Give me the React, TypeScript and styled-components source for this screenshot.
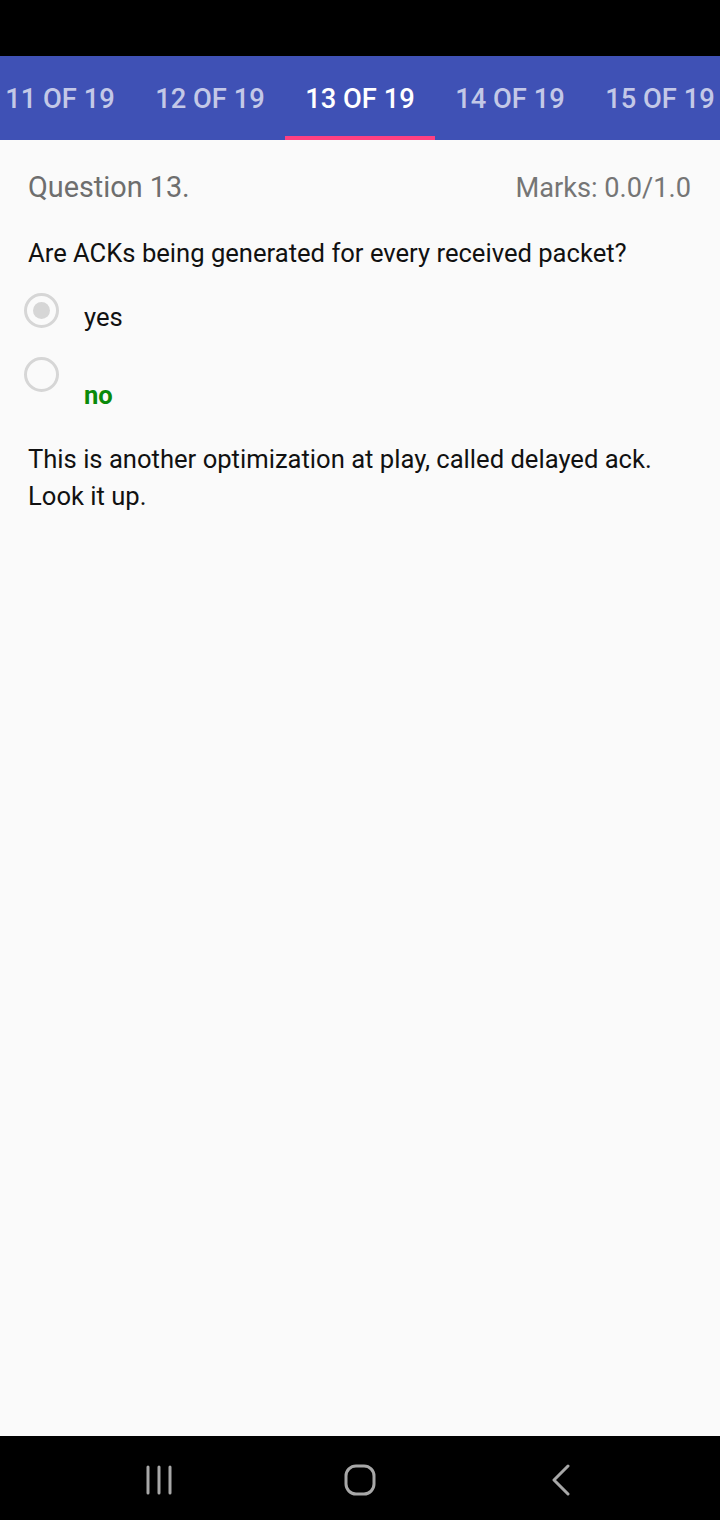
import React from "react";
import styled, {createGlobalStyle} from "styled-components";

const GlobalStyle = createGlobalStyle`
  html, body {
    margin: 0;
    padding: 0;
    background: #FAFAFA;
  }
  body {
    font-family: Roboto, "Noto Sans", sans-serif;
  }
`;

const Screen = styled.div({
  width: 720,
  height: 1520,
  display: "flex",
  flexDirection: "column",
  backgroundColor: "#FAFAFA",
  overflow: "hidden",
});

const StatusBar = styled.div({
  height: 56,
  backgroundColor: "#000",
  flexShrink: 0,
});

const TabBar = styled.div({
  height: 84,
  backgroundColor: "#3F51B5",
  display: "flex",
  flexShrink: 0,
  overflow: "hidden",
  marginLeft: -15, // strip is scrolled so the current tab sits centred
});

const Tab = styled.div<{$active?: boolean}>(({$active}) => ({
  width: 150,
  flexShrink: 0,
  display: "flex",
  alignItems: "center",
  justifyContent: "center",
  fontSize: 27.3,
  fontWeight: 500,
  color: $active ? "#FFFFFF" : "rgba(255,255,255,0.7)",
  boxSizing: "border-box",
  borderBottom: `4px solid ${$active ? "#FF4081" : "transparent"}`,
  paddingTop: 6,
}));

const Content = styled.div({
  flex: 1,
  padding: "30px 28px 0 28px",
});

const HeaderRow = styled.div({
  display: "flex",
  justifyContent: "space-between",
  alignItems: "baseline",
  color: "#6E6E6E",
  lineHeight: "34px",
});

const QuestionTitle = styled.div({
  fontSize: 28.8,
});

const Marks = styled.div({
  fontSize: 27.2,
  color: "#757575",
  marginRight: 1,
});

const QuestionText = styled.div({
  marginTop: 33,
  fontSize: 25.6,
  lineHeight: "30px",
  color: "#111",
});

const Options = styled.div({
  marginTop: 25,
  marginLeft: -4,
  display: "flex",
  flexDirection: "column",
  gap: 16,
});

const Option = styled.div({
  display: "flex",
  alignItems: "flex-start",
  gap: 25,
  minHeight: 48,
});

const Radio = styled.div<{$checked?: boolean}>(({$checked}) => ({
  width: 35,
  height: 35,
  borderRadius: "50%",
  border: "3px solid #D6D6D6",
  boxSizing: "border-box",
  display: "flex",
  alignItems: "center",
  justifyContent: "center",
  flexShrink: 0,
  "&::after": {
    content: '""',
    width: 17,
    height: 17,
    borderRadius: "50%",
    backgroundColor: $checked ? "#D6D6D6" : "transparent",
  },
}));

const OptionLabel = styled.div<{$correct?: boolean}>(({$correct}) => ({
  fontSize: 25.6,
  lineHeight: "30px",
  color: $correct ? "#0A8A0A" : "#111",
  fontWeight: $correct ? 700 : 400,
  paddingTop: $correct ? 23 : 9,
}));

const Explanation = styled.div({
  marginTop: 31,
  fontSize: 25.6,
  lineHeight: "37px",
  color: "#111",
});

const NavBar = styled.div({
  height: 84,
  boxSizing: "border-box",
  paddingTop: 4,
  backgroundColor: "#000",
  display: "flex",
  justifyContent: "center",
  alignItems: "center",
  flexShrink: 0,
});

const NavButton = styled.div({
  width: 201,
  display: "flex",
  justifyContent: "center",
  alignItems: "center",
});

const tabs = [11, 12, 13, 14, 15];

export default function App() {
  return (
    <Screen>
      <GlobalStyle />
      <StatusBar />
      <TabBar>
        {tabs.map((n) => (
          <Tab key={n} $active={n === 13}>
            {n} OF 19
          </Tab>
        ))}
      </TabBar>
      <Content>
        <HeaderRow>
          <QuestionTitle>Question 13.</QuestionTitle>
          <Marks>Marks: 0.0/1.0</Marks>
        </HeaderRow>
        <QuestionText>Are ACKs being generated for every received packet?</QuestionText>
        <Options>
          <Option>
            <Radio $checked />
            <OptionLabel>yes</OptionLabel>
          </Option>
          <Option>
            <Radio />
            <OptionLabel $correct>no</OptionLabel>
          </Option>
        </Options>
        <Explanation>
          This is another optimization at play, called delayed ack.
          <br />
          Look it up.
        </Explanation>
      </Content>
      <NavBar>
        <NavButton>
          <svg width="30" height="30" viewBox="0 0 30 30" fill="none" stroke="#A8A8A8" strokeWidth="3" strokeLinecap="round">
            <line x1="4" y1="2" x2="4" y2="28" />
            <line x1="15" y1="2" x2="15" y2="28" />
            <line x1="26" y1="2" x2="26" y2="28" />
          </svg>
        </NavButton>
        <NavButton>
          <svg width="32" height="32" viewBox="0 0 32 32" fill="none" stroke="#A8A8A8" strokeWidth="3">
            <rect x="2" y="2" width="28" height="28" rx="10" />
          </svg>
        </NavButton>
        <NavButton>
          <svg width="20" height="32" viewBox="0 0 20 32" fill="none" stroke="#A8A8A8" strokeWidth="3" strokeLinecap="round" strokeLinejoin="round">
            <polyline points="17,2 3,16 17,30" />
          </svg>
        </NavButton>
      </NavBar>
    </Screen>
  );
}
